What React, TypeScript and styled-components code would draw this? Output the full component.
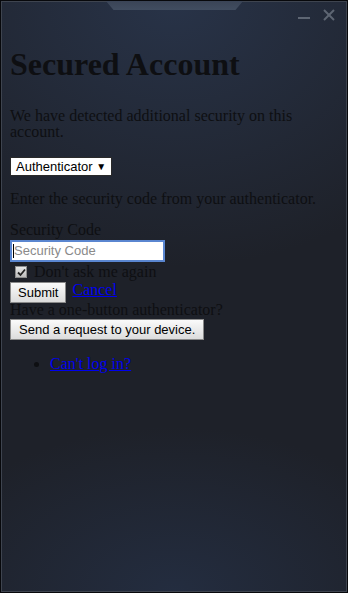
import React from "react";
import styled, { createGlobalStyle } from "styled-components";

const Global = createGlobalStyle`
  html, body { margin: 0; padding: 0; background: #000; }
  body { font-family: "Liberation Serif", "Times New Roman", serif; }
  * { box-sizing: border-box; }
`;

const Frame = styled.div`
  position: relative;
  width: 348px;
  height: 593px;
  border: 1px solid #07080b;
  box-shadow: inset 0 0 0 1px #3e444f;
  background:
    radial-gradient(ellipse 75% 28% at 50% 100%, rgba(36, 46, 66, 0.9) 0%, rgba(36, 46, 66, 0) 100%),
    radial-gradient(ellipse 95% 45% at 50% 0%, rgba(40, 51, 72, 1) 0%, rgba(40, 51, 72, 0) 100%),
    #1e2129;
  color: #0e0f12;
  overflow: hidden;
`;

const Notch = styled.div`
  position: absolute;
  top: 0;
  left: 105px;
  width: 137px;
  height: 9px;
  clip-path: polygon(0 0, 100% 0, 94.5% 100%, 5.5% 100%);
  background: linear-gradient(#3a4456, #414d60);
`;

const TitleBar = styled.div`
  height: 28px;
  display: flex;
  justify-content: flex-end;
  align-items: flex-start;
  gap: 13px;
  padding: 8px 12px 0 0;
`;

const CtrlIcon = styled.svg`
  display: block;
  width: 12px;
  height: 12px;
  stroke: #5e6673;
  stroke-width: 2;
  fill: none;
`;

const Content = styled.div`
  padding-left: 9px;
  font-size: 16px;
  line-height: 16px;
`;

const Title = styled.h1`
  margin: 19px 0 0;
  font-size: 32px;
  line-height: 32px;
  font-weight: bold;
`;

const Text = styled.p<{ $mt: number }>`
  margin: ${(p) => p.$mt}px 0 0;
  line-height: 16px;
`;

const Select = styled.div`
  margin-top: 17px;
  display: inline-flex;
  align-items: center;
  height: 19px;
  padding: 0 5px;
  background: #fff;
  border: 1px solid #2a2a2a;
  font-family: "Liberation Sans", Arial, sans-serif;
  font-size: 13px;
  color: #000;
  white-space: pre;
`;

const Arrow = styled.span`
  font-size: 10px;
`;

const Input = styled.div`
  margin-top: 2px;
  width: 155px;
  height: 22px;
  border: 2px solid #5a86d0;
  background: #fff;
  display: flex;
  align-items: center;
  padding-left: 1px;
  font-family: "Liberation Sans", Arial, sans-serif;
  font-size: 13px;
  color: #8a8a8a;
`;

const Caret = styled.span`
  width: 1px;
  height: 14px;
  background: #000;
`;

const CheckRow = styled.label`
  display: flex;
  align-items: center;
  gap: 7px;
  height: 16px;
  margin-top: 2px;
  padding-left: 5px;
`;

const CheckBox = styled.span`
  width: 12px;
  height: 12px;
  border: 1px solid #8d8d8d;
  background: linear-gradient(#e8e8e8, #bdbdbd);
  display: flex;
  align-items: center;
  justify-content: center;
`;

const ActionRow = styled.div`
  display: flex;
  align-items: flex-start;
  gap: 6px;
  margin-top: 2px;
  height: 20px;
`;

const Button = styled.button<{ $px?: number }>`
  display: block;
  height: 21px;
  padding: 0 ${(p) => p.$px ?? 7}px;
  border: 1px solid #8a8a8a;
  border-radius: 0;
  background: linear-gradient(#fafafa, #dcdcdc);
  font-family: "Liberation Sans", Arial, sans-serif;
  font-size: 13px;
  color: #000;
`;

const Link = styled.a`
  color: #0000ee;
  text-decoration: underline;
`;

const Block = styled.div<{ $mt: number }>`
  margin-top: ${(p) => p.$mt}px;
`;

const List = styled.ul`
  margin: 16px 0 0;
  padding-left: 40px;
  line-height: 16px;
`;

export default function App() {
  return (
    <>
      <Global />
      <Frame>
        <Notch />
        <TitleBar>
          <CtrlIcon viewBox="0 0 12 12">
            <line x1="0" y1="9" x2="12" y2="9" />
          </CtrlIcon>
          <CtrlIcon viewBox="0 0 12 12">
            <line x1="1" y1="1" x2="11" y2="11" />
            <line x1="11" y1="1" x2="1" y2="11" />
          </CtrlIcon>
        </TitleBar>
        <Content>
          <Title>Secured Account</Title>
          <Text $mt={28}>We have detected additional security on this account.</Text>
          <Select>
            Authenticator <Arrow>▼</Arrow>
          </Select>
          <Text $mt={15}>Enter the security code from your authenticator.</Text>
          <Text $mt={15}>Security Code</Text>
          <Input>
            <Caret />
            Security Code
          </Input>
          <CheckRow>
            <CheckBox>
              <svg width="9" height="9" viewBox="0 0 9 9">
                <path d="M1 4.5 L3.5 7 L8 1.5" stroke="#222" strokeWidth="1.8" fill="none" />
              </svg>
            </CheckBox>
            Don't ask me again
          </CheckRow>
          <ActionRow>
            <Button>Submit</Button>
            <Link href="#">Cancel</Link>
          </ActionRow>
          <Text $mt={0}>Have a one-button authenticator?</Text>
          <Block $mt={1}>
            <Button $px={8}>Send a request to your device.</Button>
          </Block>
          <List>
            <li>
              <Link href="#">Can't log in?</Link>
            </li>
          </List>
        </Content>
      </Frame>
    </>
  );
}
